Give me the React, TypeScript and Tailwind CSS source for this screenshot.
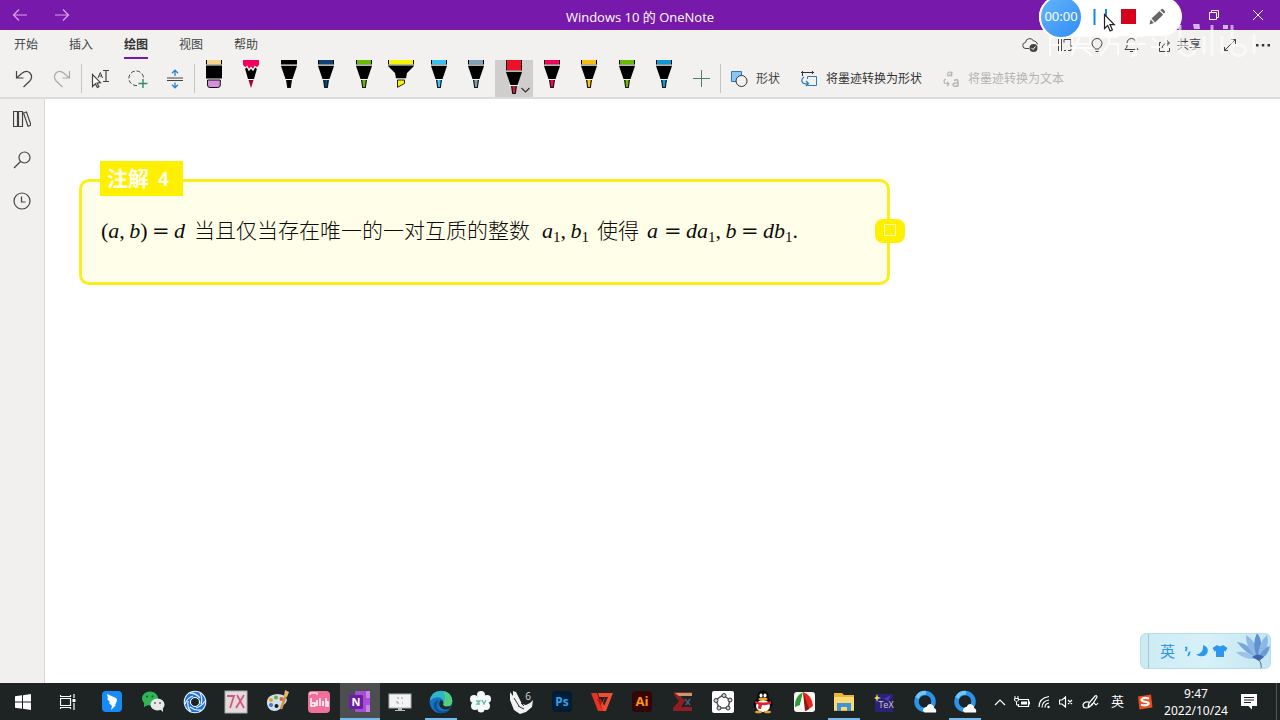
import { useState } from 'react';
import type { ReactNode } from 'react';

const TABS = ['开始', '插入', '绘图', '视图', '帮助'];

type Pen = { kind: 'eraser' | 'pencil' | 'pen' | 'highlighter'; color: string; tip?: string; label: string };

const PENS: Pen[] = [
  { kind: 'eraser', color: '#f5d58c', label: '橡皮擦' },
  { kind: 'pencil', color: '#f5005f', tip: '#8f0a35', label: '铅笔' },
  { kind: 'pen', color: '#000000', label: '黑色笔' },
  { kind: 'pen', color: '#0d4377', label: '深蓝色笔' },
  { kind: 'pen', color: '#66bb00', label: '绿色笔' },
  { kind: 'highlighter', color: '#f7f400', label: '荧光笔' },
  { kind: 'pen', color: '#35c1f5', label: '天蓝色笔' },
  { kind: 'pen', color: '#7fa3b5', label: '银河笔' },
  { kind: 'pen', color: '#ee1028', tip: '#c81c3c', label: '红色笔' },
  { kind: 'pen', color: '#f0055a', label: '粉色笔' },
  { kind: 'pen', color: '#fabd0c', label: '黄色笔' },
  { kind: 'pen', color: '#66bb00', label: '浅绿色笔' },
  { kind: 'pen', color: '#0b99cf', label: '蓝色笔' },
];

function Icon({ w = 18, h = 18, children }: { w?: number; h?: number; children: ReactNode }) {
  return (
    <svg
      width={w}
      height={h}
      viewBox={`0 0 ${w} ${h}`}
      fill="none"
      stroke="currentColor"
      strokeWidth="1"
      className="shrink-0"
      aria-hidden="true"
    >
      {children}
    </svg>
  );
}

function PenIcon({ pen, selected }: { pen: Pen; selected: boolean }) {
  if (pen.kind === 'eraser') {
    return (
      <Icon w={28} h={34}>
        <g stroke="none">
          <path d="M6 0h16v19H6z" fill="#000" />
          <path d="M7 0h14v4.500H7z" fill={pen.color} />
          <path d="M6 4.500h16v1H6zM6 18.500h16v1H6z" fill="#f2f1f0" />
        </g>
        <path d="M7.500 20h12.800v5q0 2.500-2.500 2.500H10q-2.500 0-2.500-2.500z" fill="#d490da" stroke="#111" />
      </Icon>
    );
  }
  if (pen.kind === 'highlighter') {
    return (
      <Icon w={28} h={34}>
        <g stroke="none">
          <path d="M1 0h26v6l-7 7-1 5.500H9L8 13 1 6z" fill="#000" />
          <path d="M2 0h24v4.500H2z" fill={pen.color} />
          <path d="M1 4.500h26v1H1zM8 18.500h12v1.200H8z" fill="#f2f1f0" />
        </g>
        <path d="M10.500 20h7v3.500l-7 3.800z" fill={pen.color} stroke="#222" />
      </Icon>
    );
  }
  if (pen.kind === 'pencil') {
    return (
      <Icon w={28} h={34}>
        <g stroke="none">
          <path d="M7 5l14 0-4 14h-6z" fill="#000" />
          <path d="M6 0h16v5l-2 2-2-1-2 3-2-2-2 2-2-3-2 1-2-2z" fill={pen.color} />
          <path d="M11.500 20h5L14 28z" fill={pen.tip} />
        </g>
        <path d="M6 6l2 2 2-1.500 2 3.500 2-2.500 2 2.500 2-3.500 2 1.500 2-2" stroke="#f2f1f0" strokeWidth="1.400" />
        <path d="M10 19.500h8" stroke="#f2f1f0" />
      </Icon>
    );
  }
  const y = selected ? 6 : 0;
  return (
    <Icon w={28} h={34}>
      <g stroke="none">
        <path d={`M6 0h16v${y + 6}l-4.500 13h-7L6 ${y + 6}z`} fill="#000" />
        <path d={`M7 0h14v${y + 4.5}H7z`} fill={pen.color} />
        <path d={`M6 ${y + 4.5}h16v1.200H6zM9 ${y + 19}h10v1H9z`} fill="#f2f1f0" />
        <path d={`M11 ${y + 20}h6l-1.200 8h-3.600z`} fill="#111" />
        <path d={`M12.300 ${y + 20}h3.400l-.8 7h-1.800z`} fill={pen.tip ?? pen.color} />
      </g>
    </Icon>
  );
}

function TitleBar() {
  return (
    <header className="grid h-[30px] shrink-0 grid-cols-3 items-center bg-[#7719aa] text-white">
      <div className="flex gap-[26px] pl-3 text-[#d9a6ee]">
        <button aria-label="后退">
          <Icon w={16} h={14}>
            <path d="M1.500 7H15M7 1.500L1.500 7 7 12.500" strokeWidth="1.200" />
          </Icon>
        </button>
        <button aria-label="前进">
          <Icon w={16} h={14}>
            <path d="M1 7h13.500M9 1.500L14.500 7 9 12.500" strokeWidth="1.200" />
          </Icon>
        </button>
      </div>
      <h1 className="pt-1 text-center font-['Open_Sans','Noto_Sans_CJK_SC',sans-serif] text-[13px] leading-4">
        Windows 10 的 OneNote
      </h1>
      <div className="flex justify-end gap-8 pr-4">
        <button aria-label="还原">
          <Icon w={12} h={12}>
            <path d="M1.500 3.500h7v7h-7zM3.500 3V1.500h7v7H9" />
          </Icon>
        </button>
        <button aria-label="关闭">
          <Icon w={12} h={12}>
            <path d="M1 1l10 10M11 1L1 11" />
          </Icon>
        </button>
      </div>
    </header>
  );
}

function Recorder() {
  return (
    <div className="absolute -top-[3px] right-[98px] flex h-[39px] w-[143px] items-center rounded-full bg-white">
      <div className="flex h-[44px] w-[44px] shrink-0 items-center justify-center rounded-full border-2 border-white bg-linear-to-br from-[#63b4fb] to-[#2f8df5] text-[13px] text-white">
        00:00
      </div>
      <button aria-label="暂停" className="ml-2">
        <Icon w={18} h={16}>
          <path d="M3.500 0v16M15 0v16" stroke="#1389d8" strokeWidth="2" />
        </Icon>
      </button>
      <button aria-label="停止" className="ml-3 h-[15px] w-[15px] bg-[#d4021d]"></button>
      <button aria-label="画笔" className="ml-3">
        <Icon w={18} h={18}>
          <g fill="#666" stroke="none">
            <path d="M3.500 10.500L11.500 3l3.600 3.800-8 7.600z" />
            <path d="M12.400 2.200l1.300-1.200q.6-.5 1.200 0l2 2.200q.5.7 0 1.200l-1 1z" />
            <path d="M2.600 11.600l3.300 3.500-4.400 1.400z" />
          </g>
        </Icon>
      </button>
      <div className="absolute left-[64px] top-[16px]">
        <Icon w={13} h={20}>
          <path d="M1.500 1.500v14l3.200-3 2.400 5.500 2.300-1-2.400-5.400h4.300z" fill="#fff" stroke="#222" strokeWidth="1.200" />
        </Icon>
      </div>
    </div>
  );
}

// semi-transparent stream logo that sits over the right end of the menu row
function StreamMark() {
  return (
    <svg
      className="pointer-events-none absolute -top-[6px] right-[20px] opacity-85"
      width="222"
      height="40"
      viewBox="0 0 222 40"
      fill="none"
      stroke="#fff"
      aria-hidden="true"
    >
      <path
        d="M12 13v19M12 13h10v18M12 21h10M34 12h18v8H34zM32 24h22M42 12l-9 20M45 24l9 8M62 13h18M71 12v8l-9 12M71 20h9v11M90 12h16M88 20h20M98 13v18l-5 1M114 14l5 4M113 23h9M128 12v20"
        strokeWidth="2"
      />
      <path d="M142 1v27q9 8 15-1-2-10-13-5M166 12v18M174 1v31M184 12v18M194 1v28q9 6 14-2-2-9-12-5M216 10v20" strokeWidth="3" opacity=".7" />
      <path d="M138 1h5v4h-5zM155 0l6-4 1 9h-6zM185 1h5v4h-5z" fill="#e6d3ef" stroke="none" />
    </svg>
  );
}

function MenuRow({ tab, onTab }: { tab: string; onTab: (t: string) => void }) {
  return (
    <div className="relative flex h-[30px] shrink-0 items-start justify-between">
      <nav className="flex gap-[31px] pl-[14px]">
        {TABS.map((t) => (
          <button
            key={t}
            onClick={() => onTab(t)}
            className={
              t === tab
                ? 'h-[29px] border-b-2 border-[#7719aa] pt-[3px] text-[12px] font-bold text-[#333]'
                : 'h-[29px] border-b-2 border-transparent pt-[3px] text-[12px] text-[#444]'
            }
          >
            {t}
          </button>
        ))}
      </nav>
      <div className="flex h-[30px] items-center pr-[9px] text-[#444]">
        <button aria-label="同步" className="mr-[17px]">
          <Icon w={17} h={16}>
            <path d="M7 11.500H4a3 3 0 0 1-.5-6A4.200 4.200 0 0 1 11.500 4a3.500 3.500 0 0 1 3.800 3.500" />
            <circle cx="11.500" cy="11" r="4" fill="#444" stroke="none" />
            <path d="M9.500 11l1.500 1.500 2.500-3" stroke="#fff" />
          </Icon>
        </button>
        <button aria-label="阅读" className="mr-[16px]">
          <Icon w={17} h={16}>
            <path d="M2.500 2v12M5.500 2v12M8 2.500h7v11h-3M8 2.500v3M8 13.500h2" />
          </Icon>
        </button>
        <button aria-label="提示" className="mr-[18px]">
          <Icon w={16} h={16}>
            <path d="M6 11.500Q3 9 3 6.500a5 5 0 0 1 10 0q0 2.500-3 5M6 12h4M6.500 14.500h3" />
          </Icon>
        </button>
        <button aria-label="通知" className="mr-[17px]">
          <Icon w={17} h={16}>
            <path d="M2 12.500h13L13 10V6a4.500 4.500 0 0 0-9 0v4zM7 14.500h3" />
          </Icon>
        </button>
        <button className="mr-[21px] flex items-center gap-[4px] text-[12px]">
          <Icon w={16} h={16}>
            <path d="M4 5.500H2.500v9h10V11M5 11q1-5 7-5M9.500 3l3 3-3 3" />
          </Icon>
          共享
        </button>
        <button aria-label="全屏" className="mr-[17px]">
          <Icon w={16} h={16}>
            <path d="M2.500 13.500l11-11M9 2.500h4.500V7M2.500 10v3.500H6" />
          </Icon>
        </button>
        <button aria-label="更多">
          <Icon w={16} h={6}>
            <path d="M1 2h2.500v2.500H1zM6.800 2h2.500v2.500H6.800zM12.500 2H15v2.500h-2.500z" fill="#333" stroke="none" />
          </Icon>
        </button>
      </div>
      <StreamMark />
    </div>
  );
}

function Toolbar() {
  const [selected, setSelected] = useState(8);

  return (
    <div className="flex h-[37px] shrink-0 items-stretch pl-[5px] text-[12px] text-[#444]">
      <button aria-label="撤消" className="flex w-[38px] items-center justify-center">
        <Icon w={18} h={20}>
          <path d="M1.500 2v7h7M1.500 9L7 4.200q4.500-3.500 8-.2 3.300 4-.2 8L8.500 18" strokeWidth="1.200" />
        </Icon>
      </button>
      <button aria-label="恢复" className="flex w-[38px] items-center justify-center text-[#aaa]">
        <Icon w={18} h={20}>
          <path d="M16.500 2v7h-7M16.500 9L11 4.200q-4.500-3.500-8-.2-3.300 4 .2 8L9.500 18" strokeWidth="1.200" />
        </Icon>
      </button>
      <div className="mb-1 mt-1 w-px bg-[#c4c4c4]"></div>
      <button aria-label="选择" className="flex w-[37px] items-center justify-center">
        <Icon w={19} h={20}>
          <path d="M1.500 5.500v12l3-2.800 1.800 3.800 1.600-.8-1.800-3.700 3.400-.3z" fill="#fff" strokeWidth="1.200" />
          <path d="M7 9l2.300-5.500L11.500 9M7.800 7h3" />
          <path d="M12 1.500h6M12 12.500h6M15 1.500v11" strokeWidth="1.200" />
        </Icon>
      </button>
      <button aria-label="套索选择" className="flex w-[37px] items-center justify-center">
        <Icon w={20} h={20}>
          <path d="M9 16.500A7.300 7.300 0 1 1 15.500 9" strokeDasharray="4 2" />
          <path d="M15 10v9M10.500 14.500h9" stroke="#2c8f62" strokeWidth="1.400" />
        </Icon>
      </button>
      <button aria-label="插入空间" className="flex w-[38px] items-center justify-center">
        <Icon w={18} h={20}>
          <path d="M1 9h16M1 11.500h16" stroke="#444" strokeWidth="1.200" />
          <path d="M9 7V1.500M6 4.200l3-3 3 3M9 13.500V19M6 15.800l3 3 3-3" stroke="#2a86c7" strokeWidth="1.300" />
        </Icon>
      </button>
      <div className="mb-1 mt-1 w-px bg-[#c4c4c4]"></div>
      <div className="flex w-[488px]">
        {PENS.map((pen, i) => (
          <button
            key={pen.label}
            aria-label={pen.label}
            onClick={() => setSelected(i)}
            className={
              i === selected
                ? 'relative flex flex-1 justify-center bg-[#d0cecd]'
                : 'relative flex flex-1 justify-center'
            }
          >
            <PenIcon pen={pen} selected={i === selected} />
            {i === selected && (
              <span className="absolute bottom-0 right-[2px] bg-[#d0cecd]">
                <Icon w={11} h={14}>
                  <path d="M1.500 5l4 4 4-4" stroke="#333" strokeWidth="1.200" />
                </Icon>
              </span>
            )}
          </button>
        ))}
      </div>
      <button aria-label="添加笔" className="flex w-[37px] items-center justify-center">
        <Icon w={17} h={17}>
          <path d="M8.500 0v17M0 8.500h17" stroke="#4a8070" />
        </Icon>
      </button>
      <div className="mb-1 mt-1 w-px bg-[#c4c4c4]"></div>
      <div className="flex gap-5 pl-[9px] pt-px">
        <button className="flex items-center gap-2">
          <Icon>
            <path d="M1.500 1.500h10v10h-10z" fill="#8fc4ee" stroke="#2a7cc0" />
            <circle cx="11.500" cy="11" r="5.500" fill="#f2f1f0" stroke="#333" />
          </Icon>
          形状
        </button>
        <button className="flex items-center gap-2 text-[#333]">
          <Icon>
            <path d="M1 2.500h13M2.500 1v5M12.500 1v3" />
            <path d="M7.500 6.500h9v9h-9v-2M7.500 9V6.500" stroke="#2a7cc0" />
            <path d="M4 7q-4 3-1 6 2 1.500 5 .5M6 11l2.500 2.500L6 16" stroke="#2a7cc0" strokeWidth="1.200" />
          </Icon>
          将墨迹转换为形状
        </button>
        <button disabled className="flex items-center gap-2 text-[#b3b3b3]">
          <Icon>
            <path d="M10 2.500q-4-1.500-4.500 2 .5 3 4-.5l.5-2-.5 4.500M4 9q-3.500 1.500-1 4.500l4 .5M5 12l2 2-2 2" strokeWidth="1.200" />
            <path d="M12 10.500q4-2 4 1V16.500M16 13q-5-.5-5 2 1 2.500 5 .5" strokeWidth="1.400" />
          </Icon>
          将墨迹转换为文本
        </button>
      </div>
    </div>
  );
}

function Sidebar() {
  return (
    <aside className="flex w-[45px] shrink-0 flex-col items-center gap-[23px] border-r border-[#d8d6d5] bg-[#f1f0ef] pt-[11px] text-[#444]">
      <button aria-label="笔记本">
        <Icon>
          <path d="M.5 1.500h4v15h-4zM5.500 1.500h4v15h-4zM10.500 3l3-1 4.500 13-3 1.200z" strokeWidth="1.200" />
        </Icon>
      </button>
      <button aria-label="搜索">
        <Icon>
          <circle cx="11.500" cy="6.500" r="5.500" strokeWidth="1.200" />
          <path d="M7.500 10.500L1 17" strokeWidth="1.300" />
        </Icon>
      </button>
      <button aria-label="最近的笔记">
        <Icon>
          <circle cx="9" cy="9" r="8" strokeWidth="1.200" />
          <path d="M8.500 4.500v5.500h4" strokeWidth="1.200" />
        </Icon>
      </button>
    </aside>
  );
}

function Sub({ children }: { children: ReactNode }) {
  return <span className="relative top-1 text-[15px] not-italic leading-none">{children}</span>;
}

function Equals() {
  return <span className="w-[22px] font-['DejaVu_Serif',serif] text-[21px] leading-none">=</span>;
}

function Note() {
  return (
    <section className="relative ml-[34px] mt-[80px] h-[106px] w-[811px] max-w-full rounded-[10px] border-3 border-[#fbee1c] bg-[#fffee8] pl-[19px] pt-[33px]">
      <h2 className="absolute -top-[21px] left-[18px] flex h-[35px] w-[83px] items-center gap-[9px] bg-[#fff000] pl-[7px] pt-px text-[21px] font-bold text-[#fffff0]">
        <span>注解</span>
        <span className="text-[19px]">4</span>
      </h2>
      <p className="flex items-baseline whitespace-nowrap font-['Liberation_Serif','Noto_Sans_CJK_SC',serif] text-[21px] leading-8 text-[#0c0c08]">
        <span className="w-[51px] text-[22px]">
          (<i>a</i>,&thinsp;<i>b</i>)
        </span>
        <Equals />
        <i className="w-5 text-[22px]">d</i>
        <span className="w-[348px] font-light">当且仅当存在唯一的一对互质的整数</span>
        <span className="w-[55px] text-[22px]">
          <i>a</i>
          <Sub>1</Sub>,&thinsp;<i>b</i>
          <Sub>1</Sub>
        </span>
        <span className="w-[50px] font-light">使得</span>
        <i className="w-[17px] text-[22px]">a</i>
        <Equals />
        <span className="w-[55px] text-[22px]">
          <i>da</i>
          <Sub>1</Sub>,&thinsp;<i>b</i>
        </span>
        <Equals />
        <span className="text-[22px]">
          <i>db</i>
          <Sub>1</Sub>.
        </span>
      </p>
      <span className="absolute -right-[18px] top-[37px] flex h-6 w-[30px] justify-center rounded-[8px] bg-[#fff000] pt-[5px]">
        <span className="h-3 w-3 border border-[#fffbb0]"></span>
      </span>
    </section>
  );
}

function ImePanel() {
  return (
    <div className="absolute bottom-[14px] right-[9px] flex h-[36px] w-[131px] items-center overflow-hidden rounded-[6px] border border-[#b7dde8] bg-linear-to-r from-[#cdeaf3] via-[#d7f1f8] to-[#c4e6f2] text-[#2d96ee]">
      <div className="ml-[7px] h-full w-px bg-[#9ccbd8]"></div>
      <button className="ml-[11px] text-[15px] leading-none">英</button>
      <button aria-label="标点" className="ml-[8px]">
        <Icon w={10} h={14}>
          <path d="M2 3.500h1.500v2L2.500 7M6.500 7.500v1.500l-1.500 3" strokeWidth="1.700" />
        </Icon>
      </button>
      <button aria-label="半角" className="ml-[2px]">
        <Icon w={14} h={14}>
          <path d="M8 1q6 2 4.500 7.500Q9 15 1 10.500 9 9.500 8 1z" fill="currentColor" stroke="none" />
        </Icon>
      </button>
      <button aria-label="皮肤" className="ml-[3px]">
        <Icon w={16} h={14}>
          <path d="M5 1q3 2.500 6 0l4.500 3-2 3.500-1.500-.7V13H4V6.800l-1.500.7-2-3.500z" fill="currentColor" stroke="none" />
        </Icon>
      </button>
      <div className="absolute right-0 top-0">
        <Icon w={36} h={36}>
          <g stroke="none">
            <path d="M24 25Q10 18 3 8q14 2 21 17z" fill="#76a7dc" />
            <path d="M24 25Q11 14 12 1q12 7 12 24z" fill="#8fb7e6" />
            <path d="M24 25Q17 11 23-1q8 10 1 26z" fill="#5f90cf" />
            <path d="M24 25Q24 9 33 1q4 13-9 24z" fill="#8db8e4" />
            <path d="M24 25Q28 14 36 12q-2 12-12 13z" fill="#6c9cd6" />
            <path d="M24 25Q9 26 2 18q13-2 22 7z" fill="#9bc2ea" />
            <path d="M18 23q6-5 12 0l-5 4z" fill="#3c69ad" />
          </g>
          <path d="M24 25q4 3 3 11" stroke="#506a86" />
        </Icon>
      </div>
    </div>
  );
}

const APPS_LEFT: { name: string; icon: ReactNode }[] = [
  {
    name: '钉钉',
    icon: (
      <>
        <rect x="2" y="1" width="20" height="21" rx="4" fill="#168bf8" />
        <path d="M7 4l9 4q2 2 0 5l-1 2h1l-5 5 1-4-3-3 1-1-3-3 1-.5z" fill="#fff" />
      </>
    ),
  },
  {
    name: '微信',
    icon: (
      <>
        <ellipse cx="9" cy="8.500" rx="8" ry="7" fill="#2fb457" />
        <path d="M3 13l0 4 4-2z" fill="#2fb457" />
        <circle cx="6" cy="6.500" r="1" fill="#155a2a" />
        <circle cx="11.500" cy="6.500" r="1" fill="#155a2a" />
        <ellipse cx="16.500" cy="14.500" rx="7" ry="6" fill="#e8e8e8" />
        <path d="M19 19l3 3v-4z" fill="#e8e8e8" />
        <circle cx="14" cy="13" r="1" fill="#666" />
        <circle cx="19" cy="13" r="1" fill="#666" />
      </>
    ),
  },
  {
    name: '录屏',
    icon: (
      <>
        <circle cx="12" cy="12" r="11.300" fill="#e6f1fc" />
        <circle cx="12" cy="12" r="7.500" fill="none" stroke="#1b70d8" strokeWidth="5.500" />
        <path
          d="M7 3q6 0 10 5M17 3q3 5 1 11M22 11q-3 5-9 7M18 20q-6 1-11-3M8 22Q4 17 5 11M2 14q2-6 8-8"
          fill="none"
          stroke="#dcecfb"
          strokeWidth="1.300"
        />
        <circle cx="12" cy="12" r="4.500" fill="#1d2426" stroke="#fff" />
      </>
    ),
  },
  {
    name: '7X',
    icon: (
      <>
        <rect x="1" y="1" width="22" height="22" fill="#e3dadd" stroke="#aaa" />
        <path d="M3 6h7L6 18M13 5l7 13M20 5l-8 13" fill="none" stroke="#d25a7c" strokeWidth="1.800" />
      </>
    ),
  },
  {
    name: '画图',
    icon: (
      <>
        <path d="M1 14Q0 5 11 4q9 0 10 6-1 4-4 5-3 6-9 6-6-1-7-7z" fill="#d3dfe6" />
        <circle cx="5" cy="10" r="2" fill="#e7a232" />
        <circle cx="10" cy="7.500" r="2" fill="#58b04c" />
        <circle cx="15.500" cy="9" r="2" fill="#e25c36" />
        <circle cx="5" cy="15" r="2" fill="#3f7ddb" />
        <circle cx="10.500" cy="16" r="2" fill="#1d2020" />
        <path d="M21 2l-6 17" stroke="#c9954e" strokeWidth="2.500" />
        <path d="M19 0l4 2-2 5-3-1z" fill="#e8b868" />
      </>
    ),
  },
  {
    name: '哔哩哔哩',
    icon: (
      <>
        <rect x="1" y="1" width="22" height="22" rx="4" fill="#f0709a" />
        <path d="M3 5V3h7v2" fill="none" stroke="#ffd7e4" strokeWidth="1.500" />
        <path d="M4 8v8h4v-3H5M10 10v6M13 8v8M16 11v5M19 8v8h2v-4h-2" fill="none" stroke="#fff" strokeWidth="1.500" />
      </>
    ),
  },
];

const APPS_RIGHT: { name: string; state?: 'active' | 'open'; icon: ReactNode }[] = [
  {
    name: 'OneNote',
    state: 'active',
    icon: (
      <>
        <rect x="7" y="1" width="15" height="21" rx="1" fill="#a54fd0" />
        <path d="M18 1h4v21h-4z" fill="#c783e8" />
        <path d="M18 8h4v7h-4z" fill="#ae4be0" />
        <rect x="1" y="5" width="14" height="14" rx="1" fill="#6c1da5" />
        <text x="8" y="16" textAnchor="middle" fontSize="11" fontWeight="700" fill="#fff">N</text>
      </>
    ),
  },
  {
    name: '白板',
    icon: (
      <>
        <rect x="1" y="4" width="22" height="14" fill="#f3f3f3" stroke="#a9a9a9" />
        <path d="M9 8h2M13 8h2M9 11v2h2M14 13h1" stroke="#999" fill="none" />
        <path d="M10 18h4v2h3v1H7v-1h3z" fill="#bbb" />
      </>
    ),
  },
  {
    name: 'Edge',
    state: 'open',
    icon: (
      <>
        <circle cx="12" cy="12" r="11.300" fill="#1673c4" />
        <path d="M.8 11Q2 .7 12.500.7q10 .8 10.800 10.300-.3 5.500-6.300 5.500-4-.5-2.500-3 .5-6-6-6.300-5 .3-7.700 3.800z" fill="#2fb5c8" />
        <path d="M14 .9q9 1.500 9.300 10.100-.3 5.500-6.300 5.500-4-.5-2.500-3Q18 7 14 .9z" fill="#52cf7c" />
        <path d="M10 10q-5 7 1 10.500 5 2 10-1.500-4 5-10 4.200Q3 20 5 13q2-3 5-3z" fill="#0e4f9a" />
        <path d="M11.500 10q3.500.5 2.700 3.500-.7 2.500 3 3 3 .2 5.300-1-1 2.500-2.500 3.500-7 1.500-9.500-3-1-3.500 1-6z" fill="#202828" />
      </>
    ),
  },
  {
    name: '几何',
    icon: (
      <>
        <g fill="#f3fcf9">
          <circle cx="12" cy="5" r="4" />
          <circle cx="18" cy="9" r="4" />
          <circle cx="17" cy="16" r="4" />
          <circle cx="12" cy="19" r="3.500" />
          <circle cx="6" cy="16" r="4" />
          <circle cx="5" cy="9" r="4" />
          <circle cx="12" cy="12" r="6" />
        </g>
        <path d="M7 11h4l-3 3h3M13 10l2 4 2-4" fill="none" stroke="#65bca9" strokeWidth="1.300" />
      </>
    ),
  },
  {
    name: 'Rhino',
    icon: (
      <>
        <path d="M1 2l3 4V1l3 1 4 8 2 4 4 1 4-2 3-3-1 7-6 5-6 2-6-4L1 10z" fill="#f2f2f2" />
        <path d="M5 8l5 8M9 16l6 3M12 13l3 3" stroke="#333" />
        <text x="19" y="10" textAnchor="middle" fontSize="10" fill="#ddd">6</text>
      </>
    ),
  },
  {
    name: 'Photoshop',
    icon: (
      <>
        <rect x="2" y="1" width="20" height="21" rx="4" fill="#001d36" />
        <text x="12" y="16" textAnchor="middle" fontSize="12" fontWeight="700" fill="#31a2f2">Ps</text>
      </>
    ),
  },
  {
    name: 'WPS',
    icon: (
      <>
        <path d="M1 3h6l6 18H8z" fill="#e83324" />
        <path d="M7 9h4l3 7-1 5z" fill="#b91a14" />
        <path d="M8 3h15l-7 18h-3l-2-6 4-8h-6z" fill="#f14b32" />
        <path d="M15 7h3l-4 9-1-3z" fill="#202626" />
      </>
    ),
  },
  {
    name: 'Illustrator',
    icon: (
      <>
        <rect x="2" y="1" width="20" height="21" rx="4" fill="#350503" />
        <text x="12" y="16" textAnchor="middle" fontSize="13" fontWeight="700" fill="#ff9a00">Ai</text>
      </>
    ),
  },
  {
    name: 'MathType',
    icon: (
      <>
        <path d="M3 2h18v4H10l4 5-4 6h11v4H2v-3l6-7-5-6z" fill="#8f1d22" />
        <path d="M4 3h17v3H8z" fill="#c09a75" />
        <path d="M14 9l5 6M19 9l-4 6" stroke="#4a607a" strokeWidth="1.500" />
      </>
    ),
  },
  {
    name: 'GeoGebra',
    icon: (
      <>
        <rect x="1" y="1" width="22" height="22" rx="2" fill="#fff" />
        <path d="M12 5l7 5-2 8H8l-3-8z" fill="none" stroke="#555" strokeWidth="1.500" />
        <g fill="#cfcfe8" stroke="#333">
          <circle cx="13" cy="5.500" r="2" />
          <circle cx="19" cy="10" r="2" />
          <circle cx="17" cy="18" r="2" />
          <circle cx="8" cy="18" r="2" />
          <circle cx="5" cy="10.500" r="2" />
        </g>
      </>
    ),
  },
  {
    name: 'QQ',
    icon: (
      <>
        <ellipse cx="12" cy="14" rx="9.500" ry="7" fill="#0c0c0c" />
        <path d="M6 8q0-7.500 6-7.500T18 8v4H6z" fill="#0c0c0c" />
        <ellipse cx="12" cy="16" rx="7" ry="6" fill="#fff" />
        <ellipse cx="10" cy="5.500" rx="1.500" ry="2" fill="#fff" />
        <ellipse cx="14" cy="5.500" rx="1.500" ry="2" fill="#fff" />
        <ellipse cx="12" cy="9" rx="4.500" ry="1.500" fill="#f2a51c" />
        <path d="M4 11q8 3 16 0v3q-5 1.500-9 1l-1 4-3-.5.500-4L4 13z" fill="#e0202c" />
        <ellipse cx="7.500" cy="22" rx="3.500" ry="1.300" fill="#eba22c" />
        <ellipse cx="16.500" cy="22" rx="3.500" ry="1.300" fill="#eba22c" />
      </>
    ),
  },
  {
    name: '几何画板',
    icon: (
      <>
        <rect x="2" y="2" width="21" height="20" rx="3" fill="#f4f4f2" />
        <path d="M11 2Q2 7 3 17l5-2z" fill="#2d9c38" />
        <path d="M11 2L8 15l5 6z" fill="#fff" />
        <path d="M11 2q9 3 10 14l-7 5z" fill="#e02a20" />
        <path d="M11 2l6 17-4 2z" fill="#8d1512" />
      </>
    ),
  },
  {
    name: '文件资源管理器',
    state: 'open',
    icon: (
      <>
        <path d="M2 3h8l2 2h10v16H2z" fill="#e9b63a" />
        <path d="M2 7h20v13H2z" fill="#fbd872" />
        <path d="M5 21v-8h14v8h-4v-4H9v4z" fill="#3f94d8" />
      </>
    ),
  },
  {
    name: 'TeX',
    icon: (
      <>
        <rect x="3" y="4" width="18" height="18" fill="#2b2278" />
        <path d="M5 4l1 3 3 1-3 1-1 3-1-3-2-1 2-1z" fill="#e3dd50" />
        <path d="M8 6l4 3 7-4-3 6z" fill="#4b3fb8" />
        <text x="14" y="18" textAnchor="middle" fontSize="9" fill="#d9c9c3">TeX</text>
      </>
    ),
  },
  { name: 'QQ浏览器', icon: <CloudRing /> },
  { name: 'QQ浏览器 2', state: 'open', icon: <CloudRing /> },
];

function CloudRing() {
  return (
    <>
      <circle cx="12" cy="11.500" r="8.500" fill="none" stroke="#2b93ea" strokeWidth="4.500" />
      <path d="M4 8q3-6 9-5" fill="none" stroke="#6dc6fa" strokeWidth="4" />
      <path d="M12 22.500q-3-1-1.500-4 1.500-2 3-1.500 2-4.500 6-2 2 1.500 1.500 3 3 1 2 4.500z" fill="#fff" />
    </>
  );
}

function AppIcon({ children }: { children: ReactNode }) {
  return (
    <svg
      width="24"
      height="24"
      viewBox="0 0 24 24"
      className="font-['Open_Sans','Noto_Sans',sans-serif]"
      aria-hidden="true"
    >
      {children}
    </svg>
  );
}

function Taskbar() {
  return (
    <footer className="flex h-[37px] shrink-0 bg-[#1e2324] text-white">
      <button aria-label="开始菜单" className="flex w-[45px] items-center justify-center">
        <Icon w={16} h={16}>
          <path d="M0 2.300l7-1v6.200H0zM8 1.200L16 0v7.500H8zM0 8.500h7v6.200l-7-1zM8 8.500h8V16l-8-1.200z" fill="#fff" stroke="none" />
        </Icon>
      </button>
      <button aria-label="任务视图" className="flex w-[46px] items-center justify-center">
        <Icon w={16} h={16}>
          <path d="M.5 4.500h10v7H.5zM.5 1v1.500h10V1M.5 15v-1.500h10V15M14 0v4M14 9v7" strokeWidth="1.200" />
          <path d="M12.500 5h3v3h-3z" fill="#fff" stroke="none" />
        </Icon>
      </button>
      <div className="flex w-[249px]">
        {APPS_LEFT.map((app) => (
          <button key={app.name} aria-label={app.name} className="flex flex-1 items-center justify-center">
            <AppIcon>{app.icon}</AppIcon>
          </button>
        ))}
      </div>
      <div className="flex flex-1">
        {APPS_RIGHT.map((app) => (
          <button
            key={app.name}
            aria-label={app.name}
            className={
              app.state === 'active'
                ? 'relative flex flex-1 items-center justify-center bg-[#4c4e50]'
                : 'relative flex flex-1 items-center justify-center'
            }
          >
            <AppIcon>{app.icon}</AppIcon>
            {app.state === 'active' && <span className="absolute inset-x-0 bottom-0 h-[2px] bg-[#76b9ed]"></span>}
            {app.state === 'open' && <span className="absolute inset-x-1 bottom-0 h-[2px] bg-[#76b9ed]"></span>}
          </button>
        ))}
      </div>
      <div className="ml-1 flex w-[291px] items-center">
        <button aria-label="显示隐藏的图标" className="flex w-[22px] justify-center">
          <Icon w={12} h={8}>
            <path d="M1 7l5-5 5 5" strokeWidth="1.200" />
          </Icon>
        </button>
        <button aria-label="电池" className="flex w-[22px] justify-center">
          <Icon w={16} h={14}>
            <path d="M5 4.500h9.500v7h-10V9" strokeWidth="1.200" />
            <path d="M7 6.500h6v3H7zM15 6.500h1v3h-1z" fill="#fff" stroke="none" />
            <path d="M1 1v2.500M4 1v2.500M.5 3.500h4v2q-2 2-4 0zM2.500 7v3h2" />
          </Icon>
        </button>
        <button aria-label="网络" className="flex w-[22px] justify-center">
          <Icon w={14} h={14}>
            <path d="M2 12Q2 3 12 1.500M5 12.500Q5 6 12 5M8 12.500q0-4 4-4.500" strokeWidth="1.200" />
            <circle cx="11.500" cy="12" r="1.200" fill="#fff" stroke="none" />
          </Icon>
        </button>
        <button aria-label="静音" className="flex w-[22px] justify-center">
          <Icon w={14} h={12}>
            <path d="M.5 4v4h2.500l3.500 3V1L3 4zM9 4l4 4M13 4L9 8" strokeWidth="1.200" />
          </Icon>
        </button>
        <button aria-label="手写笔" className="flex w-[27px] justify-center">
          <Icon w={17} h={16}>
            <path d="M6 13l1-4 6-7q2-1 2 1l-5 8-4 2M7 8q-5-1-6 3 0 3 3 3 4 0 6-4 2-2 3 0t3-1" strokeWidth="1.200" />
          </Icon>
        </button>
        <button className="w-[27px] text-center text-[13px]">英</button>
        <button aria-label="搜狗输入法" className="flex w-[27px] justify-center">
          <Icon w={16} h={16}>
            <path d="M1 2.500L14 .5l1.500 13-13 2z" fill="#ee4a1c" stroke="none" />
            <path d="M12 4.500q-6-1.500-7.500 1 0 2 4 2.300 4 .5 3 2.500-2 2-7.500.5" stroke="#fff" strokeWidth="2.200" />
          </Icon>
        </button>
        <div className="w-[76px] text-center text-[12px] leading-[17px]">
          <div>9:47</div>
          <div>2022/10/24</div>
        </div>
        <button aria-label="通知中心" className="flex w-[30px] justify-center">
          <Icon w={16} h={16}>
            <path d="M0 0h16v12h-5v3.500L7.500 12H0z" fill="#fff" stroke="none" />
            <path d="M3 3.500h10M3 6h10M3 8.500h7" stroke="#222" />
          </Icon>
        </button>
        <div className="ml-3 h-full w-px bg-[#555]"></div>
      </div>
    </footer>
  );
}

export default function App() {
  const [tab, setTab] = useState('绘图');

  return (
    <div className="relative flex h-screen flex-col overflow-hidden bg-[#f2f1f0] font-['Noto_Sans','Noto_Sans_CJK_SC',sans-serif]">
      <TitleBar />
      <MenuRow tab={tab} onTab={setTab} />
      <Toolbar />
      <main className="relative flex flex-1 border-t-2 border-[#dddcdb]">
        <Sidebar />
        <div className="flex-1 bg-white">
          <Note />
        </div>
        <ImePanel />
      </main>
      <Taskbar />
      <Recorder />
    </div>
  );
}
